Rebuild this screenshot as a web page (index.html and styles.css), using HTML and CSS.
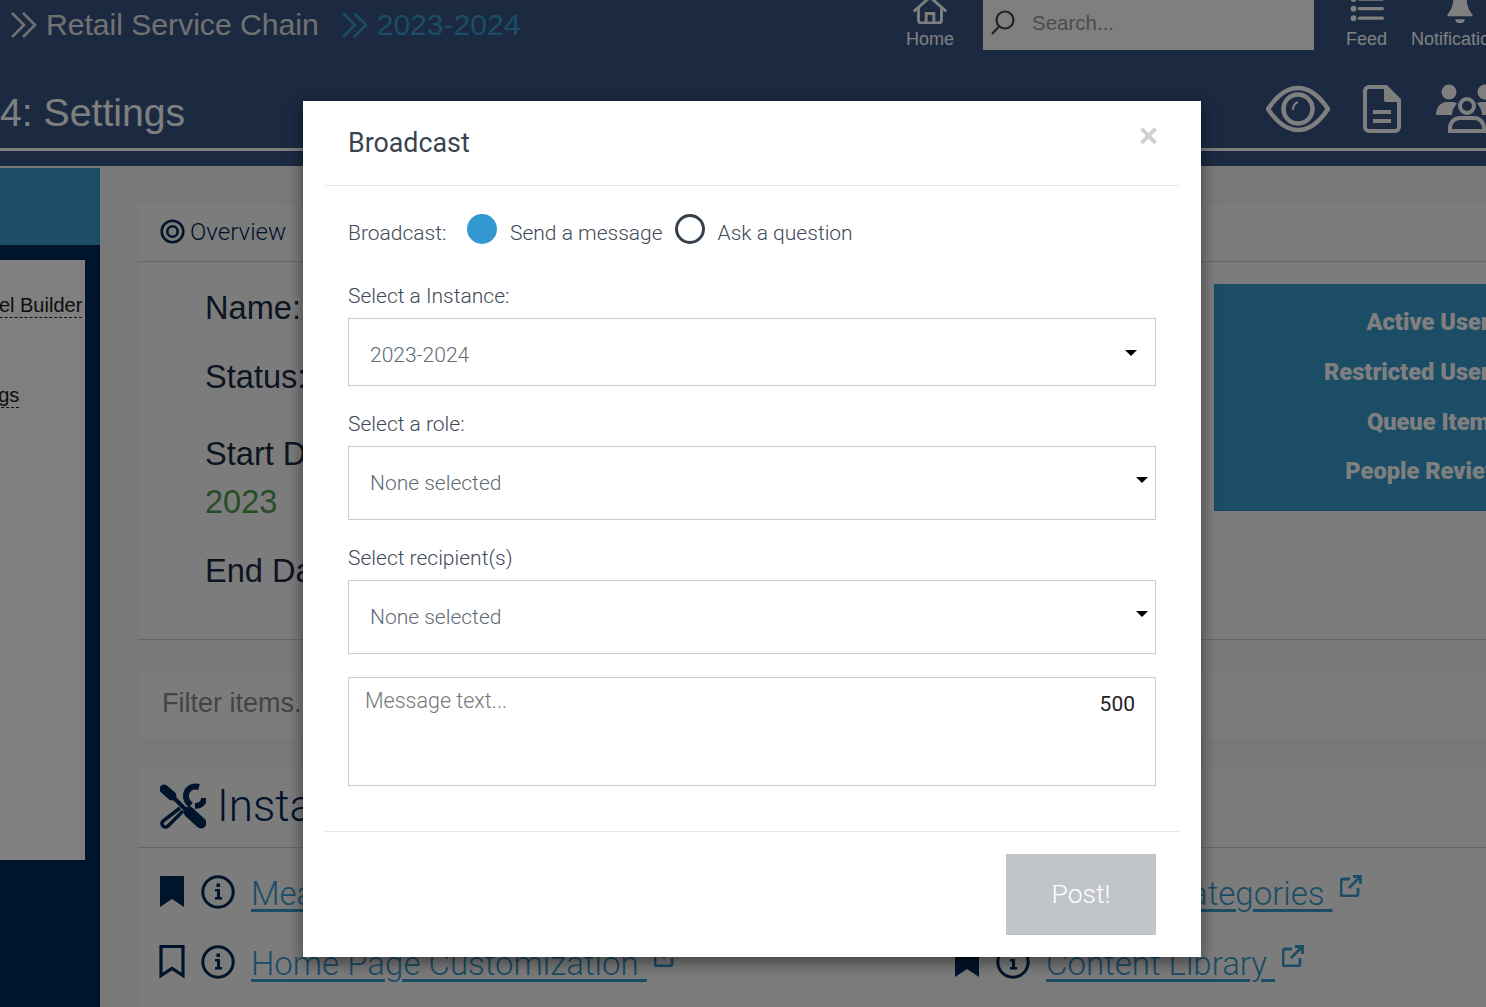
FILE: index.html
```html
<!DOCTYPE html>
<html lang="en">
<head>
<meta charset="utf-8">
<title>Broadcast</title>
<link rel="stylesheet" href="styles.css">
</head>
<body>
<div class="page">
  <header class="header">
    <div class="topbar">
      <div class="crumbs">
        <svg class="chev" viewBox="0 0 27 26"><path d="M2 1l12 12L2 25M13 1l12 12-12 12"/></svg>
        <span class="crumb">Retail Service Chain</span>
        <svg class="chev chev-blue" viewBox="0 0 27 26"><path d="M2 1l12 12L2 25M13 1l12 12-12 12"/></svg>
        <span class="crumb crumb-blue">2023-2024</span>
      </div>
      <div class="nav-item nav-home">
        <svg class="nav-icon" width="38" height="25" viewBox="0 5 38 25"><path d="M2 17L19 2l17 15M7 13v13a3 3 0 0 0 3 3h18a3 3 0 0 0 3-3V13M15 29V19h8v10"/></svg>
        <span>Home</span>
      </div>
      <div class="search">
        <svg class="search-icon" width="26" height="26" viewBox="0 0 26 26"><circle cx="15" cy="10" r="8.500"/><path d="M9 16.500L2 24"/></svg>
        <span>Search...</span>
      </div>
      <div class="nav-item nav-feed">
        <svg class="nav-icon nav-list" width="36" height="25" viewBox="0 0 36 25"><path d="M10 -1h24M10 9h24M10 19h24"/><circle cx="4" cy="-1" r="3"/><circle cx="4" cy="9" r="3"/><circle cx="4" cy="19" r="3"/></svg>
        <span>Feed</span>
      </div>
      <div class="nav-item nav-bell">
        <svg class="bell" width="30" height="25" viewBox="0 0 30 25"><path d="M8-4h14c0 8 1 13 6 19v2H2v-2C7 9 8 4 8-4zM10 20h10c0 3-2 4-5 4s-5-1-5-4z"/></svg>
        <span>Notifications</span>
      </div>
    </div>
    <div class="titlebar">
      <div class="page-title">4: Settings</div>
      <svg class="tool-eye" width="64" height="48" viewBox="0 0 64 48"><path d="M2 24C12 9 22 3 32 3s20 6 30 21C52 39 42 45 32 45S12 39 2 24z"/><circle cx="32" cy="24" r="14.500"/><path class="thin" d="M27 25c0-4 2-7 5-8"/></svg>
      <svg class="tool-doc" width="38" height="48" viewBox="0 0 38 48"><path d="M6 2h17l13 13v27a4 4 0 0 1-4 4H6a4 4 0 0 1-4-4V6a4 4 0 0 1 4-4z"/><path class="fold" d="M21 2l15 15H23a2 2 0 0 1-2-2z"/><path d="M10 27h18M10 36h18"/></svg>
      <svg class="tool-people" width="62" height="50" viewBox="0 0 62 50"><g class="solid"><circle cx="13" cy="8" r="7.500"/><circle cx="49" cy="8" r="7.500"/><path d="M0 31c0-8 5-13 11-13h5c2 0 4 .5 5 1.500-3 3-5 7-5 11.500zM62 31c0-8-5-13-11-13h-5c-2 0-4 .5-5 1.500 3 3 5 7 5 11.500z"/></g><circle cx="31" cy="22" r="7"/><path d="M14 47v-3c0-6 5-10 10-10h14c5 0 10 4 10 10v3z"/></svg>
    </div>
    <div class="rule"></div>
  </header>

  <div class="layout">
    <aside class="sidebar">
      <div class="side-top"></div>
      <div class="side-nav">
        <div class="side-card">
          <div class="side-link side-model"><span>Model Builder</span></div>
          <div class="side-link side-settings"><span>Settings</span></div>
        </div>
      </div>
    </aside>

    <main class="main">
      <section class="panel overview">
        <div class="tabs">
          <svg class="target" width="25" height="25" viewBox="0 0 25 25"><circle cx="12.500" cy="12.500" r="10.800"/><circle cx="12.500" cy="12.500" r="5.200"/></svg>
          <span class="tab-label">Overview</span>
        </div>
        <div class="details">
          <div class="facts">
            <div class="fact fact-name">Name:</div>
            <div class="fact fact-status">Status:</div>
            <div class="fact fact-start">Start Date:</div>
            <div class="fact fact-year">2023</div>
            <div class="fact fact-end">End Date:</div>
          </div>
          <div class="stats">
            <div>Active Users:</div>
            <div>Restricted Users:</div>
            <div>Queue Items:</div>
            <div>People Review:</div>
          </div>
        </div>
      </section>

      <section class="panel filter">Filter items...</section>

      <section class="panel tools">
        <div class="tools-head">
          <svg class="tools-icon" width="46" height="46" viewBox="0 0 46 46">
            <path class="blade" d="M4 6l8 7"/>
            <path class="mid" d="M11 12l17 17"/>
            <path class="thick" d="M29 29l12 11"/>
            <path class="line" d="M20 25L3 38a3.500 3.500 0 0 0 5 5l15-15"/>
            <path class="line-w" d="M39 4C32 2 26 6 26 13c0 4 2 7 5 9M44 15c0 5-4 8-9 8"/>
          </svg>
          <span class="tools-title">Instance Tools</span>
        </div>
        <div class="links">
          <div class="link-row">
            <svg class="mark" width="26" height="33" viewBox="0 0 26 33"><path d="M2 1h22a1 1 0 0 1 1 1v30l-12-8-12 8V2a1 1 0 0 1 1-1z"/></svg>
            <svg class="info" width="34" height="34" viewBox="0 0 34 34"><circle cx="17" cy="17" r="15.200"/><path class="glyph" d="M14 14h5v8h2v2.500h-7V22h2v-5.500h-2zM15.500 8.500h3.500v3.500h-3.500z"/></svg>
            <a class="doc-link">Measures&nbsp;</a>
          </div>
          <div class="link-row">
            <svg class="mark" width="26" height="33" viewBox="0 0 26 33"><path d="M2 1h22a1 1 0 0 1 1 1v30l-12-8-12 8V2a1 1 0 0 1 1-1z"/></svg>
            <svg class="info" width="34" height="34" viewBox="0 0 34 34"><circle cx="17" cy="17" r="15.200"/><path class="glyph" d="M14 14h5v8h2v2.500h-7V22h2v-5.500h-2zM15.500 8.500h3.500v3.500h-3.500z"/></svg>
            <a class="doc-link">Content Categories&nbsp;</a>
            <svg class="ext" width="22" height="22" viewBox="0 0 22 22"><path d="M10 4H3a2 2 0 0 0-2 2v13a2 2 0 0 0 2 2h13a2 2 0 0 0 2-2v-6M13 1.500h7.500V9M20 2L9 13"/></svg>
          </div>
          <div class="link-row">
            <svg class="mark mark-open" width="26" height="33" viewBox="0 0 26 33"><path d="M2 1.500h22v29l-11-7-11 7z"/></svg>
            <svg class="info" width="34" height="34" viewBox="0 0 34 34"><circle cx="17" cy="17" r="15.200"/><path class="glyph" d="M14 14h5v8h2v2.500h-7V22h2v-5.500h-2zM15.500 8.500h3.500v3.500h-3.500z"/></svg>
            <a class="doc-link">Home Page Customization&nbsp;</a>
            <svg class="ext" width="22" height="22" viewBox="0 0 22 22"><path d="M10 4H3a2 2 0 0 0-2 2v13a2 2 0 0 0 2 2h13a2 2 0 0 0 2-2v-6M13 1.500h7.500V9M20 2L9 13"/></svg>
          </div>
          <div class="link-row">
            <svg class="mark" width="26" height="33" viewBox="0 0 26 33"><path d="M2 1h22a1 1 0 0 1 1 1v30l-12-8-12 8V2a1 1 0 0 1 1-1z"/></svg>
            <svg class="info" width="34" height="34" viewBox="0 0 34 34"><circle cx="17" cy="17" r="15.200"/><path class="glyph" d="M14 14h5v8h2v2.500h-7V22h2v-5.500h-2zM15.500 8.500h3.500v3.500h-3.500z"/></svg>
            <a class="doc-link">Content Library&nbsp;</a>
            <svg class="ext" width="22" height="22" viewBox="0 0 22 22"><path d="M10 4H3a2 2 0 0 0-2 2v13a2 2 0 0 0 2 2h13a2 2 0 0 0 2-2v-6M13 1.500h7.500V9M20 2L9 13"/></svg>
          </div>
        </div>
      </section>
    </main>
  </div>

  <div class="backdrop">
    <div class="modal">
      <div class="modal-head">
        <h2 class="modal-title">Broadcast</h2>
        <span class="close">×</span>
      </div>
      <div class="modal-body">
        <div class="radio-row">
          <span class="radio-label">Broadcast:</span>
          <span class="radio radio-on"></span>
          <span class="radio-text radio-send">Send a message</span>
          <span class="radio radio-off"></span>
          <span class="radio-text radio-ask">Ask a question</span>
        </div>
        <label class="field-label label-first">Select a Instance:</label>
        <div class="select select-instance"><span>2023-2024</span><i class="caret caret-instance"></i></div>
        <label class="field-label">Select a role:</label>
        <div class="select"><span>None selected</span><i class="caret"></i></div>
        <label class="field-label">Select recipient(s)</label>
        <div class="select"><span>None selected</span><i class="caret"></i></div>
        <div class="message">
          <span class="message-text">Message text...</span>
          <span class="count">500</span>
        </div>
      </div>
      <div class="modal-foot">
        <button class="post">Post!</button>
      </div>
    </div>
  </div>
</div>
</body>
</html>
```

FILE: styles.css
```css
* { box-sizing: border-box; }
html, body { margin: 0; padding: 0; }
body { font-family: "Liberation Sans", Arial, sans-serif; background: #f2f2f2; }
.page { position: relative; width: 1486px; height: 1007px; overflow: hidden; background: #f2f2f2; }

/* header */
.header { height: 166px; background: #365482; color: #fff; }
.topbar { display: flex; height: 50px; }
.crumbs { flex: 0 0 906px; display: flex; align-items: center; padding: 0 0 0 10px; height: 50px; }
.chev { width: 27px; height: 26px; flex: none; margin-right: 9px; fill: none; stroke: #e2e2e2; stroke-width: 2.600; }
.chev-blue { stroke: #369acc; margin-left: 22px; }
.crumb { font-size: 30.100px; color: #e2e2e2; white-space: nowrap; }
.crumb-blue { color: #369acc; }
.nav-item { flex: none; display: flex; flex-direction: column; align-items: center; font-size: 18px; line-height: 21px; color: #fff; white-space: nowrap; }
.nav-item span { margin-top: 5px; }
.nav-home { width: 48px; }
.nav-feed { width: 41px; margin-left: 32px; }
.nav-bell { margin-left: 24px; }
.nav-icon { fill: none; stroke: #fff; stroke-width: 3; }
.nav-list { stroke-width: 3.400; stroke-linecap: round; }
.nav-list circle { fill: #fff; stroke: none; }
.bell { fill: #fff; }
.search { flex: none; width: 331px; height: 50px; margin-left: 29px; background: #fff; display: flex; align-items: center; padding: 0 0 4px 7px; color: #999; font-size: 20.500px; }
.search-icon { fill: none; stroke: #444; stroke-width: 2.200; margin-right: 16px; }

.titlebar { display: flex; align-items: flex-start; height: 98px; }
.page-title { flex: 0 0 1266px; padding-top: 40px; font-size: 39.200px; line-height: 46px; color: #fff; }
.tool-eye { flex: none; margin-top: 35px; fill: none; stroke: #fff; stroke-width: 4.500; }
.tool-eye .thin { stroke-width: 2; }
.tool-doc { flex: none; margin: 35px 0 0 33px; fill: none; stroke: #fff; stroke-width: 4; }
.tool-doc .fold { fill: #fff; stroke: none; }
.tool-people { flex: none; margin: 34px 0 0 35px; fill: none; stroke: #fff; stroke-width: 4; }
.tool-people .solid { fill: #fff; stroke: none; }
.rule { height: 3px; background: #fff; }

/* layout */
.layout { display: flex; height: 841px; }
.sidebar { flex: 0 0 100px; padding-top: 2px; }
.side-top { height: 77px; background: #369acc; }
.side-nav { height: 762px; background: #002856; padding-top: 15px; }
.side-card { width: 85px; height: 600px; background: #fff; padding-top: 34px; overflow: hidden; }
.side-link { font-size: 20px; line-height: 23px; color: #1a1a1a; white-space: nowrap; }
.side-link span { display: inline-block; border-bottom: 1px dashed #222; }
.side-model { margin-left: -40px; }
.side-settings { margin: 66px 0 0 -53px; }

.main { flex: 1; min-width: 0; padding: 39px 0 0 38px; }
.panel { background: #f9f9f9; width: 1400px; }
.overview { height: 435px; border-bottom: 1px solid #ccc; }
.tabs { height: 57px; display: flex; align-items: center; padding: 0 0 3px 22px; border-bottom: 1px solid #ccc; font-family: Roboto, sans-serif; font-weight: 300; }
.target { fill: none; stroke: #002856; stroke-width: 2.600; margin: 0 5px 0 0; }
.tab-label { font-size: 24.100px; color: #002856; }
.details { display: flex; }
.facts { flex: 0 0 1076px; padding: 26px 0 0 67px; font-size: 32.600px; color: #1b2a41; }
.fact { line-height: 40px; }
.fact-status { margin-top: 29px; }
.fact-start { margin-top: 37px; }
.fact-year { margin-top: 8px; color: #4f9a4f; }
.fact-end { margin-top: 29px; }
.stats { margin-top: 22px; width: 295px; height: 227px; background: #369acc; padding: 23px 0 0; display: flex; flex-direction: column; align-items: flex-end; font-family: Roboto, sans-serif; font-weight: 900; font-size: 23.600px; line-height: 30px; color: #fff; gap: 19.800px; white-space: nowrap; }
.filter { margin-top: 31px; height: 67px; padding: 0 0 2px 24px; display: flex; align-items: center; font-size: 27px; color: #888; }
.tools { margin-top: 29px; height: 241px; }
.tools-head { height: 81px; display: flex; align-items: center; padding: 0 0 3px 22px; border-bottom: 1px solid #ccc; }
.tools-icon { fill: none; stroke: #002856; flex: none; margin: 0 11px 0 0; }
.tools-icon .blade { stroke-width: 9; stroke-linecap: round; }
.tools-icon .thick { stroke-width: 11; stroke-linecap: round; }
.tools-icon .mid { stroke-width: 4; }
.tools-icon .line { stroke-width: 3.500; }
.tools-icon .line-w { stroke-width: 6; }
.tools-title { font-family: Roboto, sans-serif; font-weight: 300; font-size: 44px; color: #002856; }
.links { display: grid; grid-template-columns: 795px 500px; row-gap: 37px; padding: 27px 0 0 21px; }
.link-row { display: flex; align-items: flex-start; height: 33px; }
.mark { flex: none; fill: #002856; }
.mark-open { fill: none; stroke: #002856; stroke-width: 3.200; }
.info { flex: none; margin: 0 16px 0 16px; fill: none; stroke: #002856; stroke-width: 3; }
.info .glyph { fill: #002856; stroke: none; }
.doc-link { font-family: Roboto, sans-serif; font-weight: 300; font-size: 33px; line-height: 38px; color: #369acc; text-decoration: underline; text-decoration-thickness: 2.500px; text-underline-offset: 4px; white-space: nowrap; }
.ext { flex: none; margin: 0 0 0 7px; fill: none; stroke: #369acc; stroke-width: 2.800; }

/* modal */
.backdrop { position: absolute; inset: 0; background: rgba(0,0,0,.5); padding: 101px 0 0 303px; }
.modal { width: 898px; height: 856px; background: #fff; padding: 0 22px; box-shadow: 0 5px 15px rgba(0,0,0,.5); font-family: Roboto, sans-serif; color: #3f4a56; }
.modal-head { height: 85px; border-bottom: 1px solid #e5e5e5; display: flex; justify-content: space-between; padding: 24px 23px 0; }
.modal-title { margin: 0; font-size: 26.800px; font-weight: 400; line-height: 36px; color: #3a4450; }
.close { font-family: "Liberation Sans", sans-serif; font-weight: 700; font-size: 33px; line-height: 21px; color: #cfcfcf; margin-right: -2px; }
.modal-body { height: 645px; padding: 28px 23px 0; font-weight: 300; }
.radio-row { display: flex; align-items: center; height: 30px; font-size: 21px; }
.radio-row span { line-height: 38px; padding-top: 8px; }
.radio-label { width: 119px; }
.radio { width: 30px; height: 30px; border-radius: 50%; flex: none; padding: 0 !important; }
.radio-on { background: #3498d0; }
.radio-off { border: 3px solid #36404c; }
.radio-send { margin: 0 12px 0 13px; }
.radio-ask { margin: 0 0 0 13px; }
.field-label { display: block; font-size: 21px; line-height: 28px; margin: 24px 0 8px; color: #3f4a56; }
.label-first { margin-top: 38px; }
.select { position: relative; height: 74px; border: 1px solid #ccc; padding: 0 21px; display: flex; align-items: center; font-size: 21px; color: #5f6b76; }
.select-instance { height: 68px; }
.select-instance span { padding: 6px 0 0; }
.caret { position: absolute; right: 7px; top: 30px; border: 6px solid transparent; border-top-color: #000; border-bottom: 0; }
.caret-instance { right: 18px; top: 31px; }
.message { display: flex; justify-content: space-between; height: 109px; margin-top: 23px; border: 1px solid #ccc; padding: 9px 20px 0 16px; font-size: 21px; }
.message-text { color: #777; line-height: 28px; font-size: 21.500px; }
.count { font-weight: 400; color: #222; line-height: 34px; }
.modal-foot { display: flex; justify-content: flex-end; padding: 22px 23px 0; border-top: 1px solid #e5e5e5; }
.post { width: 150px; height: 81px; border: 0; background: #c1c5c8; color: #fff; font-family: Roboto, sans-serif; font-weight: 300; font-size: 26.500px; padding: 0 0 2px; }
```
